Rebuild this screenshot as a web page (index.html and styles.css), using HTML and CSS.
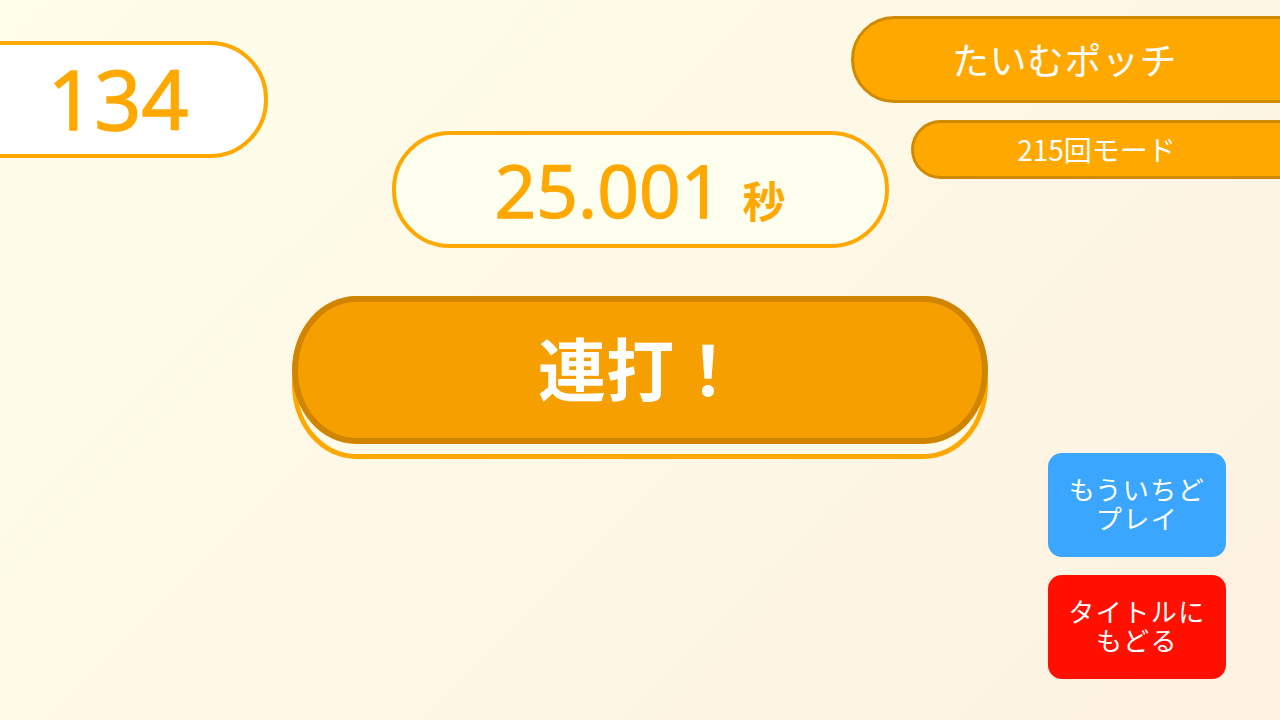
FILE: index.html
```html
<!DOCTYPE html>
<html lang="ja">
<head>
<meta charset="utf-8">
<title>たいむポッチ</title>
<link rel="stylesheet" href="styles.css">
</head>
<body>
<main class="stage">
  <section class="left">
    <div class="score">134</div>
  </section>
  <section class="center">
    <div class="timer"><span class="time">25.001</span><span class="unit">秒</span></div>
    <button class="mash">連打！</button>
  </section>
  <section class="right">
    <div class="title">たいむポッチ</div>
    <div class="mode">215回モード</div>
    <button class="action retry">もういちど<br>プレイ</button>
    <button class="action back">タイトルに<br>もどる</button>
  </section>
</main>
</body>
</html>
```

FILE: styles.css
```css
html, body {
  margin: 0;
  padding: 0;
}
body {
  font-family: "Noto Sans CJK JP", "Noto Sans", sans-serif;
}
.stage {
  width: 1280px;
  height: 720px;
  overflow: hidden;
  display: grid;
  grid-template-columns: 1fr;
  grid-template-rows: 1fr;
  background: linear-gradient(135deg, #fffeea 0%, #fef8e6 50%, #fdf1e1 100%);
}
.stage > section {
  grid-area: 1 / 1;
}
.left {
  justify-self: start;
  align-self: start;
  padding-top: 41px;
}
.score {
  box-sizing: border-box;
  width: 280px;
  height: 117px;
  margin-left: -12px;
  border: 4px solid #ffa800;
  border-radius: 0 58px 58px 0;
  background: #ffffff;
  color: #ffa800;
  font-family: "Open Sans", "Noto Sans", sans-serif;
  font-size: 82px;
  line-height: 107px;
  text-align: center;
  padding-left: 12px;
  padding-right: 32px;
  -webkit-text-stroke: 1.6px #ffa800;
}
.center {
  justify-self: center;
  align-self: start;
  display: flex;
  flex-direction: column;
  align-items: center;
  padding-top: 131px;
  gap: 48px;
}
.timer {
  box-sizing: border-box;
  width: 497px;
  height: 117px;
  border: 4px solid #ffa800;
  border-radius: 58px;
  background: #fffff0;
  color: #ffa800;
  display: flex;
  align-items: baseline;
  justify-content: center;
  padding-top: 10px;
}
.time {
  font-family: "Open Sans", "Noto Sans", sans-serif;
  font-size: 73px;
  line-height: 90px;
  -webkit-text-stroke: 1.4px #ffa800;
}
.unit {
  font-family: "Noto Sans CJK JP", sans-serif;
  font-weight: 700;
  font-size: 43px;
  margin-left: 20px;
}
.mash {
  box-sizing: border-box;
  width: 696px;
  height: 148px;
  border: 6px solid #d08400;
  border-radius: 64px / 74px;
  background: #f5a000;
  color: #ffffff;
  font-family: "Noto Sans CJK JP", sans-serif;
  font-weight: 700;
  font-size: 68px;
  line-height: 1;
  padding: 0 0 6px 0;
  box-shadow: 0 15px 0 -5px #fffbe8, 0 15px 0 0 #ffa800;
  cursor: pointer;
}
.right {
  justify-self: end;
  align-self: start;
  display: flex;
  flex-direction: column;
  align-items: flex-end;
  padding-top: 16px;
}
.title {
  box-sizing: border-box;
  width: 441px;
  height: 87px;
  margin-right: -12px;
  border: 3px solid #d08a00;
  border-radius: 44px 0 0 44px;
  background: #ffa800;
  color: #ffffff;
  font-size: 37px;
  font-weight: 400;
  line-height: 80px;
  text-align: center;
  padding-right: 14px;
  letter-spacing: 0.5px;
}
.mode {
  box-sizing: border-box;
  width: 381px;
  height: 59px;
  margin-top: 17px;
  margin-right: -12px;
  border: 3px solid #d08a00;
  border-radius: 30px 0 0 30px;
  background: #ffa800;
  color: #ffffff;
  font-size: 28px;
  line-height: 52px;
  text-align: center;
  padding-right: 10px;
}
.action {
  box-sizing: border-box;
  width: 178px;
  height: 104px;
  margin-right: 54px;
  border: none;
  border-radius: 14px;
  color: #ffffff;
  font-family: "Noto Sans CJK JP", sans-serif;
  font-weight: 400;
  font-size: 26px;
  line-height: 29px;
  padding: 0 0 4px;
  letter-spacing: 1.5px;
  cursor: pointer;
}
.retry {
  margin-top: 274px;
  background: #3ba6ff;
}
.back {
  margin-top: 18px;
  background: #ff1000;
}
```
